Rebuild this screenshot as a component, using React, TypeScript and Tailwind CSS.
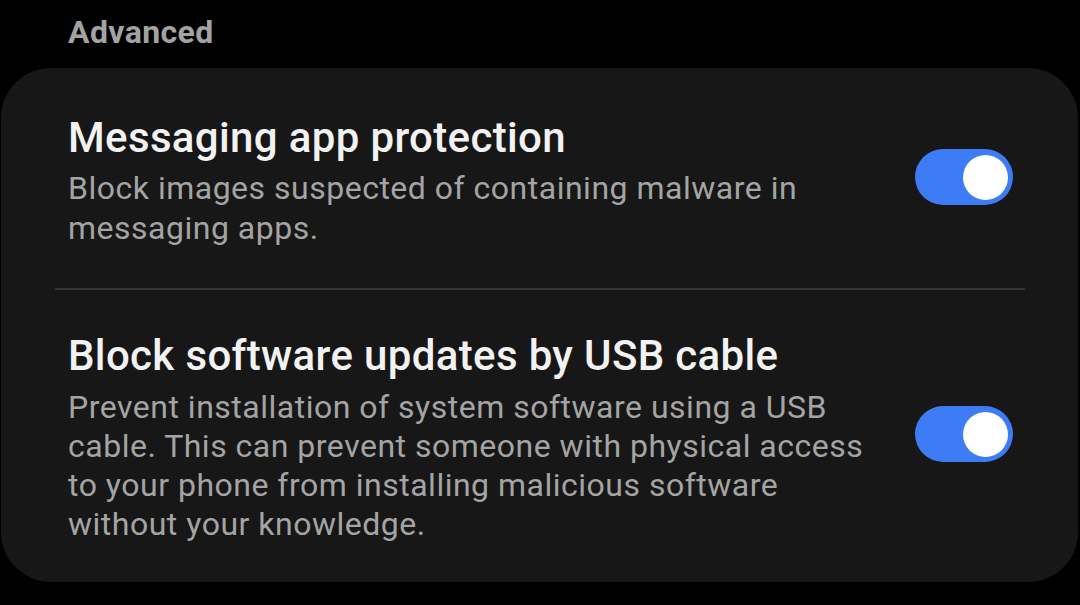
import { useState } from "react";

type Row = {
  id: string;
  title: string;
  // description lines, broken where the settings screen wraps them
  lines: string[];
  gap: string;
  leading: string;
};

const rows: Row[] = [
  {
    id: "msg",
    title: "Messaging app protection",
    lines: ["Block images suspected of containing malware in", "messaging apps."],
    gap: "mt-[6px]",
    leading: "leading-[40px]",
  },
  {
    id: "usb",
    title: "Block software updates by USB cable",
    lines: [
      "Prevent installation of system software using a USB",
      "cable. This can prevent someone with physical access",
      "to your phone from installing malicious software",
      "without your knowledge.",
    ],
    gap: "mt-[8px]",
    leading: "leading-[39px]",
  },
];

function Toggle({ on, onClick }: { on: boolean; onClick: () => void }) {
  return (
    <button
      onClick={onClick}
      className={`mb-[8px] flex h-[56px] w-[98px] shrink-0 items-center rounded-full px-[5px] ${
        on ? "justify-end bg-[#3e7cf5]" : "justify-start bg-[#4a4a4a]"
      }`}
    >
      <span className="block h-[45px] w-[45px] rounded-full bg-white" />
    </button>
  );
}

function SettingRow({ row, on, onToggle, pad }: { row: Row; on: boolean; onToggle: () => void; pad: string }) {
  return (
    <div className={`flex items-center justify-between pl-[67px] pr-[65px] ${pad}`}>
      <div className="w-[820px]">
        <div className="whitespace-nowrap text-[42px] font-medium leading-[48px] tracking-[0.35px] text-[#f2f2f2]">
          {row.title}
        </div>
        <div className={`${row.gap} text-[32px] ${row.leading} tracking-[0.5px] text-[#a4a4a4]`}>
          {row.lines.map((l) => (
            <div key={l} className="whitespace-nowrap">
              {l}
            </div>
          ))}
        </div>
      </div>
      <Toggle on={on} onClick={onToggle} />
    </div>
  );
}

export default function App() {
  const [state, setState] = useState<Record<string, boolean>>({ msg: true, usb: true });
  const flip = (id: string) => setState((s) => ({ ...s, [id]: !s[id] }));

  return (
    <div
      className="h-[605px] w-[1080px] overflow-hidden bg-black"
      style={{ fontFamily: "Roboto, 'Noto Sans', sans-serif" }}
    >
      {/* Section label */}
      <div className="pl-[68px] pt-[12px] text-[32px] font-bold leading-[40px] tracking-[0.4px] text-[#a3a3a3]">
        Advanced
      </div>

      {/* Settings card */}
      <div className="ml-[1px] mt-[16px] w-[1077px] rounded-[50px] bg-[#171717]">
        <SettingRow row={rows[0]} on={state.msg} onToggle={() => flip("msg")} pad="pt-[46px] pb-[40px]" />
        <div className="ml-[54px] mr-[53px] h-[2px] bg-[#363636]" />
        <SettingRow row={rows[1]} on={state.usb} onToggle={() => flip("usb")} pad="pt-[42px] pb-[38px]" />
      </div>
    </div>
  );
}
